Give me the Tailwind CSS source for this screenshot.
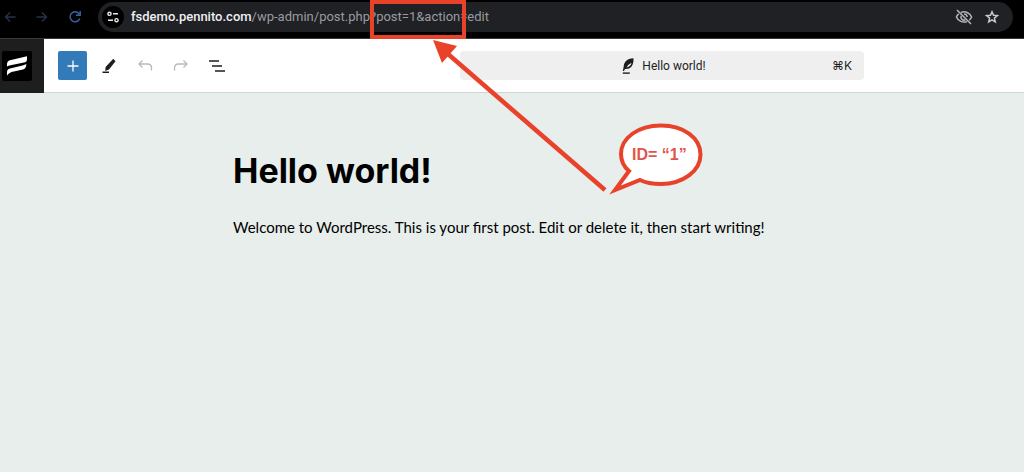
<!DOCTYPE html>
<html lang="en">
<head>
<meta charset="utf-8">
<meta name="viewport" content="width=device-width, initial-scale=1">
<title>Edit Post</title>
<script src="https://cdn.jsdelivr.net/npm/@tailwindcss/browser@4"></script>
</head>
<body class="relative flex min-h-screen flex-col bg-[#e7eeeb] font-['Inter','Liberation_Sans',sans-serif] text-black">

<!-- Browser bar -->
<div class="flex h-[39px] items-start border-b border-[#3a3a3a] bg-black pt-0.5 pr-[11px]">
  <nav class="flex h-[30px] w-[98px] shrink-0 items-center text-[#26334d]" aria-label="Browser">
    <button type="button" aria-label="Back" class="ml-1">
      <svg class="size-3" viewBox="0 0 12 12" fill="none" stroke="currentColor" stroke-width="1.3"><path d="M11.500 6H1.500M6 1.500 1.500 6 6 10.500"/></svg>
    </button>
    <button type="button" aria-label="Forward" class="ml-5">
      <svg class="size-3" viewBox="0 0 12 12" fill="none" stroke="currentColor" stroke-width="1.3"><path d="M.5 6h10M6 1.500 10.500 6 6 10.500"/></svg>
    </button>
    <button type="button" aria-label="Reload" class="ml-5 text-[#3d5f9f]">
      <svg class="size-3.5" viewBox="0 0 14 14" fill="none" stroke="currentColor" stroke-width="1.500"><path d="M11.800 8.500A5 5 0 1 1 10.900 3.600L12 4.800"/><path d="M12.200 1v4.200H8"/></svg>
    </button>
  </nav>
  <div class="flex h-[30px] flex-1 items-center rounded-full bg-[#202124] pr-3.5 pl-1">
    <button type="button" aria-label="Site information" class="flex size-[22px] items-center justify-center rounded-full bg-black text-[#e8eaed]">
      <svg class="size-3" viewBox="0 0 12 12" fill="none" stroke="currentColor" stroke-width="1.400"><circle cx="2.500" cy="2.800" r="1.600"/><path d="M6 2.800h5M1 9.200h5"/><circle cx="9.500" cy="9.200" r="1.600"/></svg>
    </button>
    <div role="textbox" aria-label="Address" tabindex="0" class="ml-[7px] flex-1 font-['Roboto',sans-serif] text-[13px] leading-5 whitespace-nowrap text-[#9a9ba0]"><span class="font-medium text-[#eeeff1]">fsdemo.pennito.com</span>/wp-admin/post.php?post=1&amp;action=edit</div>
    <button type="button" aria-label="Third-party cookies blocked" class="text-[#b4b5b8]">
      <svg class="size-[18px]" viewBox="0 0 18 18" fill="none" stroke="currentColor" stroke-width="1.500"><path d="M6 4.500C10 2.800 14.800 4.700 16.600 9c-.5 1.300-1.300 2.300-2.300 3.100M12 13.600C7.800 15 3.100 13.200 1.400 9c.5-1.300 1.300-2.400 2.400-3.200M2 2l14 14"/><path d="M9 5.900A3.100 3.100 0 0 1 12.100 9M10.300 11.800A3.100 3.100 0 0 1 6.200 7.700"/></svg>
    </button>
    <button type="button" aria-label="Bookmark this tab" class="ml-3 text-[#c8c9cb]">
      <svg class="size-3.5" viewBox="0 0 14 14" fill="none" stroke="currentColor" stroke-width="1.500"><path d="m7 1.800 1.500 3.500 3.900.3-3 2.500.9 3.800L7 9.900l-3.300 2 .9-3.800-3-2.500 3.900-.3z"/></svg>
    </button>
  </div>
</div>

<!-- Editor header -->
<header class="flex h-[54px] items-center border-b border-[#cfd5d3] bg-white text-[#1e1e1e]">
  <a href="#" aria-label="View posts" class="flex h-[54px] w-11 shrink-0 items-center bg-[#1e1e1e] pl-0.5">
    <svg class="size-[30px]" viewBox="0 0 30 30"><rect width="30" height="30" rx="2"/><path fill="#fff" d="M5 15.500V13Q5 10.300 8 9.300L25 5.300V8.200Q25 10.800 22 11.600L8.500 14.200Q6.500 14.600 5 15.500ZM5 24.500V21Q5 18.300 8 17.400L20.500 14.500Q23 13.800 24.300 13 24.600 17.400 21 18.500L9.500 21Q6.500 22 5 24.500Z"/></svg>
  </a>
  <div class="flex items-center" role="toolbar" aria-label="Document tools">
    <button type="button" aria-label="Add block" class="ml-3.5 flex size-[29px] items-center justify-center rounded-xs bg-[#327ab8] text-white">
      <svg class="size-3" viewBox="0 0 12 12" stroke="currentColor" stroke-width="1.300"><path d="M6 .5v11M.5 6h11"/></svg>
    </button>
    <button type="button" aria-label="Tools" class="ml-3.5">
      <svg class="size-4" viewBox="0 0 16 16" fill="currentColor"><path d="m12.300.8 2.200 2.400-6.500 8.300-3.800 1.500L4.600 9z"/><path d="M1.500 13.500h6.500V15H1.500z"/></svg>
    </button>
    <button type="button" aria-label="Undo" class="ml-5 text-[#b9b9b9]">
      <svg class="size-4" viewBox="0 0 16 16" fill="none" stroke="currentColor" stroke-width="1.300"><path d="M5.500 2.500 2 6l3.500 3.500M2 6h8.500Q14.500 6 14.500 10v2.500"/></svg>
    </button>
    <button type="button" aria-label="Redo" class="ml-5 text-[#b9b9b9]">
      <svg class="size-4" viewBox="0 0 16 16" fill="none" stroke="currentColor" stroke-width="1.300"><path d="m10.500 2.500 3.500 3.500-3.500 3.500M14 6H5.500Q1.500 6 1.500 10v2.500"/></svg>
    </button>
    <button type="button" aria-label="Document overview" class="ml-5">
      <svg class="size-4" viewBox="0 0 16 16" fill="none" stroke="currentColor" stroke-width="1.400"><path d="M0 3h10M3 8h10M6 13h10"/></svg>
    </button>
  </div>
  <div class="flex flex-1 justify-end pr-40">
    <button type="button" class="grid h-[29px] w-[404px] grid-cols-[1fr_auto_1fr] items-center rounded-sm bg-[#efefef] pr-3 pl-4 text-xs">
      <span></span>
      <span class="flex items-center gap-2 font-['Roboto',sans-serif]">
        <svg class="h-4 w-3" viewBox="0 0 12 16"><path fill="currentColor" d="M11.500.3Q6.500.4 3.500 3.500 1.200 6.200 1.500 9.500L.8 13H2L3 11Q7 11.400 9.200 9 11.800 6 11.500.3ZM9.500 4.800Q9 8.500 4.500 9.400 5.500 7 9.500 4.800Z" fill-rule="evenodd"/><path fill="currentColor" d="M.8 14.400h7V15.800h-7z"/></svg>
        Hello world!
      </span>
      <span class="text-right">⌘K</span>
    </button>
  </div>
</header>

<!-- Post canvas -->
<main class="mx-auto w-full max-w-[558px] flex-1 pt-14">
  <h1 class="text-[34px] leading-[44px] font-bold">Hello world!</h1>
  <p class="mt-[22px] font-['Lato',sans-serif] text-[15px] leading-6 sm:whitespace-nowrap">Welcome to WordPress. This is your first post. Edit or delete it, then start writing!</p>
</main>

<!-- Callout annotations -->
<div class="pointer-events-none absolute top-0 left-[370px] h-[39px] w-24 border-4 border-[#e8432a]"></div>
<svg class="pointer-events-none absolute top-0 left-[420px] h-[200px] w-[300px]" viewBox="420 0 300 200" aria-hidden="true">
  <path d="M448 54 605 190" stroke="#e8432a" stroke-width="4.500"/>
  <path d="m433 40 24 6-15 17z" fill="#e8432a"/>
  <path d="M629 171C623 166 621 160 621 154C621 138 638 125.500 661 125.500S700.500 138 700.500 154.500 683 184 661 184C653 184 646 183 640 180L615 190Z" fill="#fff" stroke="#e8432a" stroke-width="4"/>
</svg>
<div class="pointer-events-none absolute top-[145px] left-[632px] font-['Liberation_Sans',sans-serif] text-base leading-5 font-bold text-[#df554b]">ID= “1”</div>
</body>
</html>
